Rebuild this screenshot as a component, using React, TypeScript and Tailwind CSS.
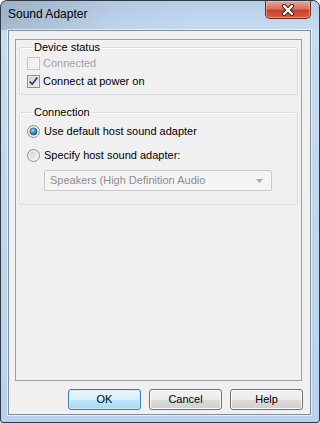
import React from 'react'

function CheckBox({ checked, disabled }: { checked?: boolean; disabled?: boolean }) {
  return (
    <svg width="13" height="13" viewBox="0 0 13 13" className="shrink-0">
      <defs>
        <linearGradient id={disabled ? 'cbd' : 'cbn'} x1="0" y1="0" x2="1" y2="1">
          <stop offset="0" stopColor={disabled ? '#efefef' : '#cbcfd5'} />
          <stop offset="1" stopColor={disabled ? '#f7f7f7' : '#f7f7f7'} />
        </linearGradient>
      </defs>
      <rect x="0.5" y="0.5" width="12" height="12" fill="#fff" stroke={disabled ? '#c4c4c4' : '#8e8f8f'} />
      <rect x="2" y="2" width="9" height="9" fill={`url(#${disabled ? 'cbd' : 'cbn'})`} stroke={disabled ? '#e2e2e2' : '#b6b9bf'} strokeWidth="0.6" />
      {checked && (
        <path d="M2.8 6.6 L5.2 9.2 L10.3 2.6" fill="none" stroke="#2f3f66" strokeWidth="1.7" strokeLinejoin="round" />
      )}
    </svg>
  )
}

function Radio({ checked }: { checked?: boolean }) {
  return (
    <svg width="13" height="13" viewBox="0 0 13 13" className="shrink-0">
      <defs>
        <linearGradient id="rb" x1="0" y1="0" x2="1" y2="1">
          <stop offset="0" stopColor="#c9ccd1" />
          <stop offset="1" stopColor="#f8f8f8" />
        </linearGradient>
        <radialGradient id="rd" cx="0.4" cy="0.35" r="0.7">
          <stop offset="0" stopColor="#9ad8f8" />
          <stop offset="0.6" stopColor="#2a8ac6" />
          <stop offset="1" stopColor="#14507e" />
        </radialGradient>
      </defs>
      <circle cx="6.5" cy="6.5" r="6" fill="url(#rb)" stroke="#8e8f8f" />
      <circle cx="6.5" cy="6.5" r="4.6" fill="none" stroke="#ffffff" strokeWidth="0.8" />
      {checked && <circle cx="6.5" cy="6.5" r="3.6" fill="url(#rd)" stroke="#1b4f78" strokeWidth="0.6" />}
    </svg>
  )
}

function Button({ label, primary }: { label: string; primary?: boolean }) {
  return (
    <div
      className={
        primary
          ? 'w-[73px] h-[21px] rounded-[3px] border border-[#3c7fb1] bg-[linear-gradient(180deg,#eaf6fd_0%,#d9f0fc_50%,#bee6fd_51%,#a7d9f5_100%)] shadow-[inset_0_0_0_1px_#cbeafb] flex items-center justify-center text-[11px] text-black'
          : 'w-[73px] h-[21px] rounded-[3px] border border-[#707070] bg-[linear-gradient(180deg,#f2f2f2_0%,#ebebeb_50%,#dddddd_51%,#cfcfcf_100%)] shadow-[inset_0_0_0_1px_#fcfcfc] flex items-center justify-center text-[11px] text-black'
      }
    >
      {label}
    </div>
  )
}

export default function App() {
  return (
    <div className="w-[320px] h-[423px] bg-white font-['Liberation_Sans',Arial,sans-serif]">
      <div className="flex flex-col w-[320px] h-[423px] rounded-t-[7px] rounded-b-[3px] border border-[#2f3946] bg-[linear-gradient(180deg,#b8cfe7_0%,#c8dcf0_8%,#bed5ec_60%,#b9d2ec_100%)]">
        {/* title bar */}
        <div className="flex items-start h-[29px] shrink-0 bg-[linear-gradient(90deg,rgba(70,85,100,0.25)_0%,rgba(70,85,100,0.05)_35%,rgba(255,255,255,0)_60%)]">
          <span className="pl-[7px] pt-[6px] text-[12px] text-black leading-[14px]">Sound Adapter</span>
          <div className="ml-auto mr-[8px] w-[46px] h-[18px] rounded-b-[5px] border border-t-0 border-[#6b2a20] bg-[linear-gradient(180deg,#e8a493_0%,#d9745f_45%,#c7412b_55%,#d75f43_100%)] shadow-[inset_0_0_0_1px_rgba(255,200,190,0.5)] flex items-center justify-center">
            <svg width="14" height="12" viewBox="0 0 14 12">
              <path d="M3 2 L11 10 M11 2 L3 10" stroke="#3a1a14" strokeWidth="4.2" strokeLinecap="round" />
              <path d="M3 2 L11 10 M11 2 L3 10" stroke="#ffffff" strokeWidth="2.4" strokeLinecap="round" />
            </svg>
          </div>
        </div>

        {/* client area */}
        <div className="ml-[7px] mr-[8px] h-[385px] shrink-0 border border-[#7f8e9e] bg-[#f0f0f0] shadow-[0_0_0_1px_rgba(255,255,255,0.6)] flex flex-col text-[11px] text-black">
          <div className="mt-[8px] ml-[6px] mr-[8px] h-[342px] border border-[#a0a0a0] bg-[#f0f0f0] flex flex-col">
            <fieldset className="mx-[3px] h-[55px] rounded-[3px] border border-[#d5dfe5] shadow-[inset_1px_1px_0_#ffffff] pl-[7px]">
              <legend className="ml-[5px] px-[2px] leading-[14px]">Device status</legend>
              <div className="flex items-center h-[18px] gap-[3px] text-[#a3a3a3]">
                <CheckBox disabled />
                <span>Connected</span>
              </div>
              <div className="flex items-center h-[18px] gap-[3px]">
                <CheckBox checked />
                <span>Connect at power on</span>
              </div>
            </fieldset>

            <fieldset className="mx-[3px] mt-[10px] h-[100px] rounded-[3px] border border-[#d5dfe5] shadow-[inset_1px_1px_0_#ffffff] pl-[7px]">
              <legend className="ml-[5px] px-[2px] leading-[14px]">Connection</legend>
              <div className="flex items-center h-[24px] gap-[4px]">
                <Radio checked />
                <span>Use default host sound adapter</span>
              </div>
              <div className="flex items-center h-[24px] gap-[4px]">
                <Radio />
                <span>Specify host sound adapter:</span>
              </div>
              <div className="ml-[17px] mt-[3px] w-[228px] h-[21px] rounded-[2px] border border-[#c9c9c9] bg-[#f4f4f4] flex items-center pl-[5px] pr-[8px] text-[#8e8e8e]">
                <span>Speakers (High Definition Audio</span>
                <svg width="7" height="4" viewBox="0 0 7 4" className="ml-auto">
                  <path d="M0 0 H7 L3.5 4 Z" fill="#a8a8a8" />
                </svg>
              </div>
            </fieldset>
          </div>

          <div className="flex justify-end gap-[8px] mt-[8px] mr-[7px]">
            <Button label="OK" primary />
            <Button label="Cancel" />
            <Button label="Help" />
          </div>
        </div>
      </div>
    </div>
  )
}
